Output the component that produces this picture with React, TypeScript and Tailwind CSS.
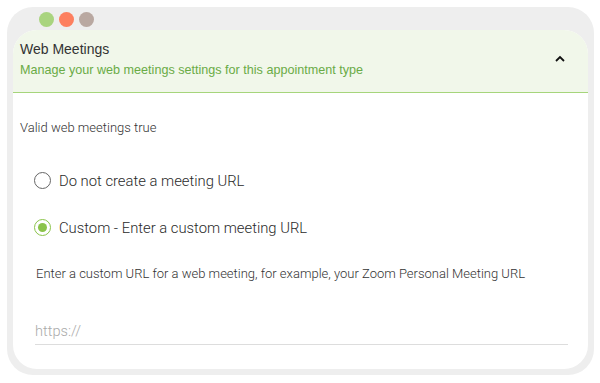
import React from "react";

const App: React.FC = () => {
  return (
    <div className="w-[600px] h-[383px] bg-white pt-[7px] px-[7px]">
      <div className="w-[587px] h-[368px] bg-[#eeeeee] rounded-[26px] px-[6px] pb-[6px] flex flex-col">
        <div className="h-[23px] flex items-center gap-[5px] pl-[26px] pt-[1px]">
          <span className="w-[15px] h-[15px] rounded-full bg-[#a9d47f]" />
          <span className="w-[15px] h-[15px] rounded-full bg-[#fd7f5f]" />
          <span className="w-[15px] h-[15px] rounded-full bg-[#b9a8a1]" />
        </div>
        <div className="flex-1 bg-white rounded-[24px] overflow-hidden flex flex-col">
          <div className="h-[63px] bg-[#f1f7ea] border-b border-[#a6d57b] flex items-center pl-[7px] pr-[22px] font-['Liberation_Sans',Arial,sans-serif]">
            <div className="flex-1 flex flex-col mb-[4px]">
              <span className="text-[14px] leading-[18px] text-[#333333]">Web Meetings</span>
              <span className="text-[12.6px] leading-[18px] text-[#6aab46] mt-[3px]">
                Manage your web meetings settings for this appointment type
              </span>
            </div>
            <svg width="12" height="8" viewBox="0 0 12 8" className="mb-[4px]">
              <path d="M2 6 L6 2 L10 6" fill="none" stroke="#111" strokeWidth="1.8" />
            </svg>
          </div>
          <div className="flex-1 font-['Roboto',sans-serif] font-light text-[#333333]">
            <p className="text-[13px] leading-[16px] pl-[7px] mt-[27px]">Valid web meetings true</p>
            <div className="pl-[21px] mt-[36px] flex flex-col gap-[30px]">
              <label className="flex items-center gap-[8px] text-[14.8px] leading-[16px] text-[#2a2a2a]">
                <span className="w-[17px] h-[17px] rounded-full border-[1.5px] border-[#666666] bg-white" />
                <span>Do not create a meeting URL</span>
              </label>
              <label className="flex items-center gap-[8px] text-[14.8px] leading-[16px] text-[#2a2a2a]">
                <span className="w-[17px] h-[17px] rounded-full border-[1.5px] border-[#8bc34a] bg-white flex items-center justify-center">
                  <span className="w-[9px] h-[9px] rounded-full bg-[#8bc34a]" />
                </span>
                <span>Custom - Enter a custom meeting URL</span>
              </label>
            </div>
            <p className="text-[13px] leading-[16px] pl-[23px] mt-[30px]">
              Enter a custom URL for a web meeting, for example, your Zoom Personal Meeting URL
            </p>
            <div className="ml-[22px] mr-[20px] mt-[37px] border-b border-[#dddddd] pb-[1px]">
              <span className="text-[14.6px] leading-[16px] text-[#aaaaaa]">https://</span>
            </div>
          </div>
        </div>
      </div>
    </div>
  );
};

export default App;
